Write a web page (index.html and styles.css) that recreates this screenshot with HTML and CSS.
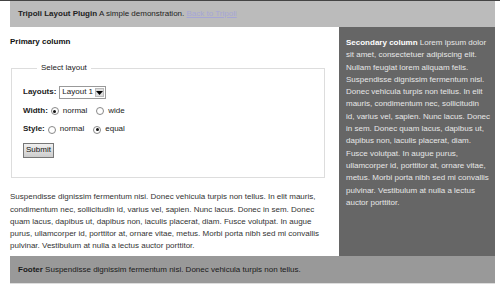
FILE: index.html
```html
<!DOCTYPE html>
<html>
<head>
<meta charset="utf-8">
<link rel="stylesheet" href="styles.css">
</head>
<body>
<div class="topbar"></div>
<div class="page">
  <header class="header"><strong>Tripoli Layout Plugin</strong> A simple demonstration. <a href="#">Back to Tripoli</a></header>
  <div class="main">
    <div class="primary">
      <h2 class="title">Primary column</h2>
      <fieldset class="box">
        <legend>Select layout</legend>
        <div class="row"><label class="lbl">Layouts:</label>
          <span class="select"><span class="sel-text">Layout 1</span><span class="sel-btn"><svg width="7" height="4" viewBox="0 0 7 4"><path d="M0 0h7L3.5 4z" fill="#000"/></svg></span></span>
        </div>
        <div class="row"><label class="lbl">Width:</label>
          <span class="radio on"></span><span class="opt">normal</span>
          <span class="radio"></span><span class="opt">wide</span>
        </div>
        <div class="row"><label class="lbl">Style:</label>
          <span class="radio"></span><span class="opt">normal</span>
          <span class="radio on"></span><span class="opt">equal</span>
        </div>
        <div class="row"><span class="btn">Submit</span></div>
      </fieldset>
      <p class="text">Suspendisse dignissim fermentum nisi. Donec vehicula turpis non tellus. In elit mauris, condimentum nec, sollicitudin id, varius vel, sapien. Nunc lacus. Donec in sem. Donec quam lacus, dapibus ut, dapibus non, iaculis placerat, diam. Fusce volutpat. In augue purus, ullamcorper id, porttitor at, ornare vitae, metus. Morbi porta nibh sed mi convallis pulvinar. Vestibulum at nulla a lectus auctor porttitor.</p>
    </div>
    <div class="secondary">
      <p class="sec-text"><strong>Secondary column</strong> Lorem ipsum dolor sit amet, consectetuer adipiscing elit. Nullam feugiat lorem aliquam felis. Suspendisse dignissim fermentum nisi. Donec vehicula turpis non tellus. In elit mauris, condimentum nec, sollicitudin<br>id, varius vel, sapien. Nunc lacus. Donec in sem. Donec quam lacus, dapibus ut, dapibus non, iaculis placerat, diam. Fusce volutpat. In augue purus, ullamcorper id, porttitor at, ornare vitae, metus. Morbi porta nibh sed mi convallis pulvinar. Vestibulum at nulla a lectus auctor porttitor.</p>
    </div>
  </div>
  <footer class="footer"><strong>Footer</strong> Suspendisse dignissim fermentum nisi. Donec vehicula turpis non tellus.</footer>
</div>
</body>
</html>
```
FILE: styles.css
```css
html, body {
  margin: 0;
  padding: 0;
  background: #fff;
}
body {
  font-family: "Liberation Sans", Arial, sans-serif;
  font-size: 8px;
  line-height: 12.3px;
  color: #333;
}
.topbar {
  height: 1px;
  background: #444;
}
.page {
  margin-left: 10px;
  width: 485px;
  border-bottom: 1px solid #ddd;
}
.header {
  background: #bbb;
  height: 26px;
  line-height: 26px;
  padding-left: 8px;
  color: #222;
}
.header a {
  color: #a6a6d6;
  text-decoration: underline;
}
.main {
  display: flex;
  height: 229px;
}
.primary {
  width: 315px;
  padding-right: 14px;
}
.title {
  margin: 9px 0 0 0;
  font-size: 8px;
  line-height: 12px;
  color: #111;
}
.box {
  margin: 14px 0 0 1px;
  padding: 9px 12px 20px 11px;
  border: 1px solid #ddd;
}
.box legend {
  padding: 0 4px;
  margin-left: 14px;
  color: #222;
}
.row {
  display: flex;
  align-items: center;
  height: 18.5px;
  color: #222;
}
.lbl {
  font-weight: bold;
  margin-right: 3px;
}
.select {
  display: inline-flex;
  align-items: center;
  height: 11px;
  border: 1px solid #999;
  background: #fff;
  padding-left: 2px;
}
.sel-text { margin-right: 2px; }
.sel-btn {
  display: inline-flex;
  align-items: center;
  justify-content: center;
  width: 9px;
  height: 9px;
  margin-right: 1px;
  background: #ddd;
  border: 1px solid #bbb;
  box-sizing: border-box;
}
.radio {
  width: 6px;
  height: 6px;
  border-radius: 50%;
  border: 1px solid #888;
  background: #fff;
  margin-right: 4px;
  position: relative;
}
.radio.on::after {
  content: "";
  position: absolute;
  left: 1.5px;
  top: 1.5px;
  width: 3px;
  height: 3px;
  border-radius: 50%;
  background: #111;
}
.opt { margin-right: 9px; }
.btn {
  display: inline-flex;
  align-items: center;
  height: 13px;
  padding: 0 2px;
  border: 1px solid #777;
  background: linear-gradient(#f0f0f0, #ccc);
  color: #111;
  margin-top: 4px;
}
.text {
  margin: 13px 0 0 0;
}
.secondary {
  width: 156px;
  background: #666;
  color: #e6e6e6;
  padding: 10px 0 8px 7px;
  box-sizing: border-box;
}
.sec-text {
  margin: 0;
  width: 145.5px;
}
.secondary strong { color: #fff; }
.footer {
  background: #999;
  height: 27px;
  line-height: 27px;
  padding-left: 8px;
  color: #1a1a1a;
}
```
